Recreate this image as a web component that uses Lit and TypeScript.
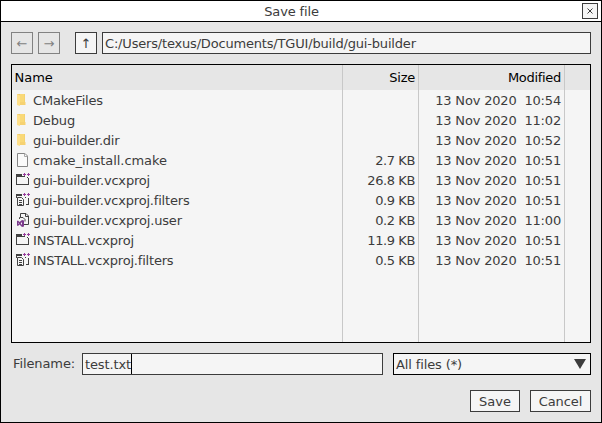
import { LitElement, html, svg, css } from "lit";
import { customElement, property } from "lit/decorators.js";

type Kind = "folder" | "file" | "project" | "filters" | "user";

interface Entry {
  kind: Kind;
  name: string;
  tracking: number;
  size: string;
  date: string;
}

const ENTRIES: Entry[] = [
  { kind: "folder", name: "CMakeFiles", tracking: -0.2, size: "", date: "13 Nov 2020  10:54" },
  { kind: "folder", name: "Debug", tracking: -0.15, size: "", date: "13 Nov 2020  11:02" },
  { kind: "folder", name: "gui-builder.dir", tracking: -0.27, size: "", date: "13 Nov 2020  10:52" },
  { kind: "file", name: "cmake_install.cmake", tracking: -0.07, size: "2.7 KB", date: "13 Nov 2020  10:51" },
  { kind: "project", name: "gui-builder.vcxproj", tracking: -0.18, size: "26.8 KB", date: "13 Nov 2020  10:51" },
  { kind: "filters", name: "gui-builder.vcxproj.filters", tracking: -0.19, size: "0.9 KB", date: "13 Nov 2020  10:51" },
  { kind: "user", name: "gui-builder.vcxproj.user", tracking: -0.17, size: "0.2 KB", date: "13 Nov 2020  11:00" },
  { kind: "project", name: "INSTALL.vcxproj", tracking: -0.19, size: "11.9 KB", date: "13 Nov 2020  10:51" },
  { kind: "filters", name: "INSTALL.vcxproj.filters", tracking: -0.19, size: "0.5 KB", date: "13 Nov 2020  10:51" },
];

const plusPlus = svg`<path fill="#963c9b" d="M8 1h1v1h1v1h-1v1h-1v-1h-1v-1h1zM12 1h1v1h1v1h-1v1h-1v-1h-1v-1h1z"/>`;

const ICONS: Record<Kind, unknown> = {
  folder: svg`
    <path fill="#f0cb6c" d="M1 2h8v9H1z"/>
    <path fill="#f9d978" d="M4 2h4.500v10H4z"/>
    <path fill="#ffe08a" d="M1 2l3 1.500v10.500l-3-1z"/>
    <path fill="#f6d272" d="M4 10h5.500v3H4z"/>`,
  file: svg`
    <path fill="#fafafa" stroke="#858585" d="M1.500 1.500h7.500l2.500 2.500v10.500h-10z"/>
    <path fill="none" stroke="#a8a8a8" d="M8.500 1.500v3h3"/>`,
  project: svg`
    <path fill="#424242" d="M0 2h6v2H0zM0 4h9v1H0zM0 5h1v8H0zM1 12h12v1H1zM12 6h1v6h-1zM11 5h1v1h-1z"/>
    ${plusPlus}`,
  filters: svg`
    <path fill="#424242" d="M0 2h6v2H0zM0 4h1v2H0zM12 6h1v7h-3v-1h2zM9 5h1v1H9z"/>
    <path fill="none" stroke="#424242" d="M1.500 5.500h4l2 2v6h-6zM3 8.500h3M3 10.500h3M3 12.500h3"/>
    ${plusPlus}`,
  user: svg`
    <path fill="none" stroke="#424242" d="M3.500 7v-1.500h1v-4h5.500l2.500 2.500v8.500H8M9.500 1v3.500h3M4.500 5.500h2.500l2 2v2"/>
    <path fill="#7b3a8c" fill-rule="evenodd" d="M6 8l2 .500v6l-2 .500-2.500-2.500L2 14l-1-.500v-4.500L2 8.500l1.500 1.500zM6 10L4.700 11.500 6 13zM2 10.500v1.500l.8-.8z"/>`,
};

@customElement("file-icon")
class FileIcon extends LitElement {
  @property() kind: Kind = "file";

  static styles = css`
    :host, .icon { display: block; width: 16px; height: 16px; }
  `;

  render() {
    return html`<svg class="icon" viewBox="0 0 16 16">${ICONS[this.kind]}</svg>`;
  }
}

@customElement("file-list")
class FileList extends LitElement {
  static styles = css`
    :host {
      box-sizing: border-box;
      display: grid;
      grid-template-columns: 330px 1px 75px 1px 145px 1px 1fr;
      border: 1px solid #000;
      background: #f5f5f5;
      color: #3c3c3c;
    }
    .column { display: flex; flex-direction: column; min-width: 0; white-space: pre; }
    .line { background: #c8c8c8; }
    .head { height: 25px; line-height: 25px; background: #e6e6e6; color: #000; }
    .cell { height: 20px; line-height: 22px; display: flex; align-items: flex-start; }
    .right .head, .right .cell { padding-right: 3px; justify-content: flex-end; text-align: right; }
    .size { letter-spacing: -0.4px; }
    .modified { letter-spacing: -0.18px; }
    .modified .head { letter-spacing: -0.3px; }
    .size .head { letter-spacing: -0.25px; }
    .left .head { padding-left: 2.5px; }
    .left .cell { padding-left: 4px; gap: 1px; }
    file-icon { margin-top: 2px; }
  `;

  render() {
    return html`
      <div class="column left">
        <div class="head">Name</div>
        ${ENTRIES.map((e) => html`<div class="cell"><file-icon .kind=${e.kind}></file-icon><span style="letter-spacing:${e.tracking}px">${e.name}</span></div>`)}
      </div>
      <div class="line"></div>
      <div class="column right size">
        <div class="head">Size</div>
        ${ENTRIES.map((e) => html`<div class="cell">${e.size}</div>`)}
      </div>
      <div class="line"></div>
      <div class="column right modified">
        <div class="head">Modified</div>
        ${ENTRIES.map((e) => html`<div class="cell">${e.date}</div>`)}
      </div>
      <div class="line"></div>
      <div class="column"><div class="head"></div></div>
    `;
  }
}

@customElement("app-root")
class AppRoot extends LitElement {
  static styles = css`
    :host {
      box-sizing: border-box;
      display: flex;
      flex-direction: column;
      width: 602px;
      height: 423px;
      border: 1px solid #000;
      background: #e6e6e6;
      color: #3c3c3c;
      font: 13px/20px "DejaVu Sans", sans-serif;
    }
    .title {
      display: flex;
      align-items: center;
      box-sizing: border-box;
      height: 21px;
      padding-right: 3px;
      border-bottom: 1px solid #000;
      background: #fff;
    }
    .caption { flex: 1; height: 20px; line-height: 22px; text-align: center; letter-spacing: -0.15px; }
    .box {
      box-sizing: border-box;
      height: 22px;
      border: 1px solid #3c3c3c;
      background: #f5f5f5;
      line-height: 22px;
      white-space: pre;
      display: flex;
      align-items: flex-start;
    }
    .center { justify-content: center; }
    .close { width: 16px; height: 16px; }
    .content { display: flex; flex-direction: column; padding: 10px 10px 0; }
    .row { display: flex; }
    .nav { width: 22px; }
    .disabled { border-color: #828282; background: #e6e6e6; color: #828282; }
    .back { margin-right: 5px; }
    .forward { margin-right: 15px; }
    .up { margin-right: 5px; }
    .path { flex: 1; padding-left: 2px; letter-spacing: -0.18px; }
    .files { height: 279px; margin: 10px 0; }
    .label { width: 69px; padding-left: 2px; line-height: 22px; letter-spacing: -0.1px; }
    .filename { width: 301px; padding-left: 2px; margin-right: 10px; letter-spacing: -0.12px; }
    .caret { width: 1px; height: 20px; background: #000; }
    .filter { flex: 1; border-color: #000; padding: 0 4px 0 2px; justify-content: space-between; letter-spacing: -0.12px; }
    .actions { justify-content: flex-end; gap: 10px; margin-top: 15px; }
    .save { width: 50px; }
    .cancel { width: 61px; letter-spacing: -0.1px; }
    svg { display: block; align-self: center; }
  `;

  render() {
    return html`
      <div class="title">
        <span class="caption">Save file</span>
        <div class="box center close">
          <svg width="6" height="6" viewBox="0 0 6 6"><path fill="none" stroke="#3c3c3c" d="M.5.5l5 5M5.500.5l-5 5"/></svg>
        </div>
      </div>
      <div class="content">
        <div class="row">
          <div class="box center nav disabled back">←</div>
          <div class="box center nav disabled forward">→</div>
          <div class="box center nav up">↑</div>
          <div class="box path">C:/Users/texus/Documents/TGUI/build/gui-builder</div>
        </div>
        <file-list class="files"></file-list>
        <div class="row">
          <div class="label">Filename:</div>
          <div class="box filename">test.txt<span class="caret"></span></div>
          <div class="box filter"><span>All files (*)</span><svg width="12" height="10" viewBox="0 0 12 10"><path fill="#3c3c3c" d="M0 0h12L6 10z"/></svg></div>
        </div>
        <div class="row actions">
          <div class="box center save">Save</div>
          <div class="box center cancel">Cancel</div>
        </div>
      </div>
    `;
  }
}
